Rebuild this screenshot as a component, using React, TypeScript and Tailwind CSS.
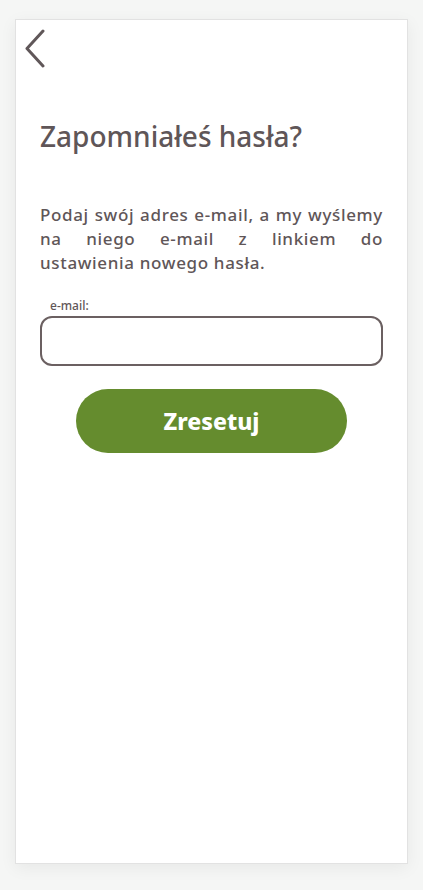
export default function App() {
  return (
    <div className="min-h-[890px] bg-[#f5f6f5] px-[15px] pt-[19px] pb-[26px] font-['Noto_Sans',sans-serif] text-[#5f5658]">
      <div className="flex h-[845px] flex-col border border-[#e2e2e2] bg-white shadow-[0_4px_16px_rgba(0,0,0,0.06)]">
        <button className="ml-[8px] mt-[9px] flex h-[38px] w-[22px] items-center justify-center">
          <svg width="22" height="39" viewBox="0 0 22 39" fill="none">
            <path
              d="M19 2 L3 19.5 L19 37"
              stroke="#605759"
              strokeWidth="3"
              strokeLinecap="round"
              strokeLinejoin="round"
            />
          </svg>
        </button>
        <div className="px-[24px]">
          <h1 className="mt-[52px] text-[28px] font-medium leading-[34px]">Zapomniałeś hasła?</h1>
          <p className="mt-[50px] text-justify text-[17px] font-medium leading-[24px] tracking-[0.65px]">
            Podaj swój adres e-mail, a my wyślemy na niego e-mail z linkiem do ustawienia nowego hasła.
          </p>
          <label className="mt-[23px] block pl-[10px] text-[12px] font-medium leading-[16px]">e-mail:</label>
          <input
            type="email"
            className="mt-[2px] h-[50px] w-full rounded-[12px] border-2 border-[#6b6061] px-3 text-[16px] outline-none"
          />
          <div className="mt-[23px] flex justify-center">
            <button className="h-[64px] w-[271px] rounded-full bg-[#658c2e] text-[23px] font-extrabold text-white">
              Zresetuj
            </button>
          </div>
        </div>
      </div>
    </div>
  );
}
